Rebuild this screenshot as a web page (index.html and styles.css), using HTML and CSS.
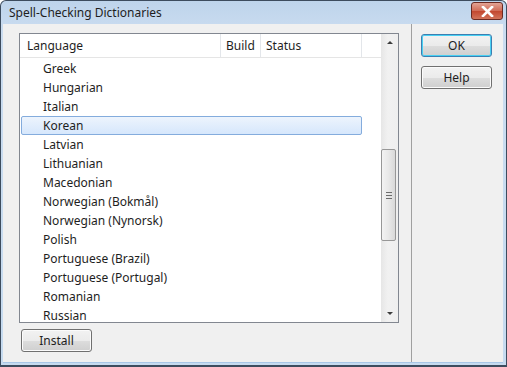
FILE: index.html
```html
<!DOCTYPE html>
<html lang="en">
<head>
    <meta charset="UTF-8">
    <title>Spell-Checking Dictionaries</title>
    <link rel="stylesheet" href="styles.css">
</head>
<body>
    <div class="window">
        <div class="titlebar">
            <span class="title">Spell-Checking Dictionaries</span>
            <div class="close">
                <svg width="13" height="11" viewBox="0 0 13 11">
                    <path d="M2 1 L11 10 M11 1 L2 10" stroke="#fff" stroke-width="2.6" stroke-linecap="square"/>
                </svg>
            </div>
        </div>
        <div class="client">
            <div class="main">
                <div class="listbox">
                    <div class="list">
                        <div class="header">
                            <div class="col col-lang">Language</div>
                            <div class="col col-build">Build</div>
                            <div class="col col-status">Status</div>
                            <div class="col col-rest"></div>
                        </div>
                        <div class="rows">
                            <div class="row">Greek</div>
                            <div class="row">Hungarian</div>
                            <div class="row">Italian</div>
                            <div class="row selected">Korean</div>
                            <div class="row">Latvian</div>
                            <div class="row">Lithuanian</div>
                            <div class="row">Macedonian</div>
                            <div class="row">Norwegian (Bokmål)</div>
                            <div class="row">Norwegian (Nynorsk)</div>
                            <div class="row">Polish</div>
                            <div class="row">Portuguese (Brazil)</div>
                            <div class="row">Portuguese (Portugal)</div>
                            <div class="row">Romanian</div>
                            <div class="row">Russian</div>
                        </div>
                    </div>
                    <div class="scrollbar">
                        <div class="arrow up"></div>
                        <div class="track">
                            <div class="thumb"><span class="grip"></span></div>
                        </div>
                        <div class="arrow down"></div>
                    </div>
                </div>
                <button class="btn install">Install</button>
            </div>
            <div class="side">
                <button class="btn default">OK</button>
                <button class="btn">Help</button>
            </div>
        </div>
    </div>
</body>
</html>
```

FILE: styles.css
```css
body {
    margin: 0;
    font-family: "Segoe UI", "Noto Sans", sans-serif;
    font-size: 12px;
    color: #1e1e1e;
}
.window {
    width: 507px;
    height: 367px;
    box-sizing: border-box;
    border: 1px solid #3d4c5e;
    border-bottom-width: 2px;
    border-radius: 6px 6px 0 0;
    background: linear-gradient(#bed4eb, #cadcf0 30px, #c6dbf0);
    padding: 0 3px 2px 2px;
    display: flex;
    flex-direction: column;
}
.titlebar {
    height: 23px;
    display: flex;
    align-items: center;
    justify-content: space-between;
    padding-left: 6px;
}
.title {
    color: #1e1e1e;
    margin-top: -1px;
}
.close {
    width: 30px;
    height: 16px;
    margin-top: -3px;
    border: 1px solid #6b2a22;
    border-radius: 3px;
    background: linear-gradient(#e3a394, #d06a55 50%, #c2472f 51%, #d2735a);
    display: flex;
    align-items: center;
    justify-content: center;
}
.client {
    flex: 1;
    display: flex;
    background: #f0f0f0;
    border-bottom: 1px solid #a8c6e6;
}
.main {
    width: 409px;
    border-right: 1px solid #a0a0a0;
    padding: 9px 0 0 16px;
    box-sizing: border-box;
    display: flex;
    flex-direction: column;
}
.listbox {
    width: 380px;
    height: 290px;
    box-sizing: border-box;
    border: 1px solid #828790;
    background: #fff;
    display: flex;
}
.list {
    flex: 1;
    overflow: hidden;
}
.header {
    height: 23px;
    display: flex;
    border-bottom: 1px solid #e5e5e5;
}
.col {
    line-height: 23px;
    border-right: 1px solid #e3e6ea;
    white-space: nowrap;
}
.col-lang {
    width: 193px;
    padding-left: 7px;
}
.col-build {
    width: 34px;
    padding-left: 5px;
}
.col-status {
    width: 95px;
    padding-left: 5px;
}
.col-rest {
    flex: 1;
    border-right: none;
}
.rows {
    padding-top: 1px;
}
.row {
    height: 19px;
    line-height: 19px;
    padding-left: 23px;
    margin-right: 19px;
    box-sizing: border-box;
    white-space: nowrap;
}
.row.selected {
    margin-left: 1px;
    padding-left: 21px;
    border: 1px solid #84acdd;
    border-radius: 2px;
    line-height: 17px;
    background: linear-gradient(#edf4fd, #d6e7fc);
}
.scrollbar {
    width: 17px;
    background: linear-gradient(90deg, #e6e6e6, #f1f1f1 40%, #efefef);
    display: flex;
    flex-direction: column;
}
.arrow {
    height: 17px;
    display: flex;
    align-items: center;
    justify-content: center;
}
.arrow::after {
    content: "";
    width: 0;
    height: 0;
    border-left: 3px solid transparent;
    border-right: 3px solid transparent;
}
.arrow.up::after {
    border-bottom: 3px solid #3c3c3c;
}
.arrow.down::after {
    border-top: 3px solid #3c3c3c;
}
.track {
    flex: 1;
    padding-top: 98px;
}
.thumb {
    width: 15px;
    height: 92px;
    box-sizing: border-box;
    border: 1px solid #979797;
    border-radius: 2px;
    background: linear-gradient(90deg, #f3f3f3, #e8e8e8 50%, #d9d9d9);
    display: flex;
    align-items: center;
    justify-content: center;
}
.grip {
    width: 6px;
    height: 5px;
    border-top: 1px solid #6c6c6c;
    border-bottom: 1px solid #6c6c6c;
    background: linear-gradient(transparent 2px, #6c6c6c 2px, #6c6c6c 3px, transparent 3px);
}
.btn {
    font-family: inherit;
    font-size: 12px;
    color: #1e1e1e;
    width: 71px;
    height: 23px;
    padding: 0;
    border: 1px solid #707070;
    border-radius: 3px;
    background: linear-gradient(#f2f2f2, #ebebeb 50%, #dddddd 51%, #cfcfcf);
    box-shadow: inset 0 0 0 1px #fbfbfb;
}
.install {
    margin: 6px 0 0 2px;
}
.side {
    flex: 1;
    padding: 10px 0 0 9px;
    display: flex;
    flex-direction: column;
    gap: 9px;
}
.btn.default {
    border-color: #3c7fb1;
    box-shadow: inset 0 0 0 1px #48d0f3;
}
```
